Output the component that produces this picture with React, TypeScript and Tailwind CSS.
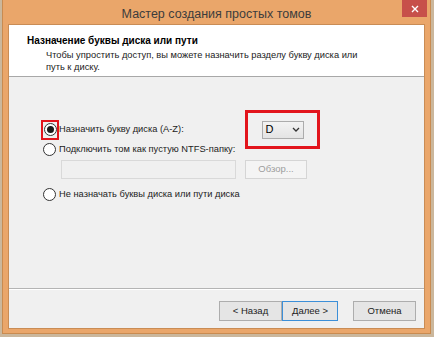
import React from "react";

function Radio({ checked }: { checked?: boolean }) {
  return (
    <span className="flex h-[13px] w-[13px] items-center justify-center rounded-full border border-[#333] bg-white">
      {checked && <span className="h-[7px] w-[7px] rounded-full bg-[#1a1a1a]" />}
    </span>
  );
}

export default function App() {
  return (
    <div
      className="h-[337px] w-[434px] overflow-hidden bg-[#cbb79c]"
      style={{ fontFamily: '"Liberation Sans", Arial, sans-serif' }}
    >
      <div className="ml-[2px] flex h-[334px] w-[429px] flex-col border-x border-b border-[#c98b50] bg-[#eaa66a]">
        {/* Title bar */}
        <div className="relative flex h-[24px] items-center justify-center pt-[4px]">
          <span className="text-[12.5px] leading-none text-[#3c3c3c]">Мастер создания простых томов</span>
          <div className="absolute right-[3px] top-0 flex h-[17px] w-[25px] items-center justify-center bg-[#c7504a]">
            <svg width="8" height="8" viewBox="0 0 8 8">
              <path d="M1 1L7 7M7 1L1 7" stroke="white" strokeWidth="1.4" />
            </svg>
          </div>
        </div>

        {/* Client area */}
        <div className="mx-[5px] mb-[4px] flex flex-1 flex-col border border-[#c98c55] bg-[#f0f0f0]">
          {/* Header */}
          <div className="h-[52px] border-b border-[#a8a8a8] bg-white pl-[18px] pt-[10px]">
            <div className="text-[10px] font-bold leading-[12px] text-black">Назначение буквы диска или пути</div>
            <div className="pl-[19px] pt-[2px] text-[9.3px] leading-[12px] text-[#222]">
              Чтобы упростить доступ, вы можете назначить разделу букву диска или
              <br />
              путь к диску.
            </div>
          </div>

          {/* Body */}
          <div className="flex flex-1 flex-col pl-[32px] pt-[33px]">
            <div className="flex items-center">
              <div className="flex h-[20px] w-[18px] items-center justify-center border-2 border-[#e2141c]">
                <Radio checked />
              </div>
              <span className="text-[9.3px] text-[#222]">Назначить букву диска (A-Z):</span>
              <div className="ml-auto mr-[104px] flex h-[39px] w-[75px] items-center justify-center border-[3px] border-[#e2141c]">
                <div className="flex h-[18px] w-[42px] items-center justify-between border border-[#acacac] bg-gradient-to-b from-[#f3f3f3] to-[#e4e4e4] px-[3px]">
                  <span className="text-[11px] leading-none text-black">D</span>
                  <svg width="8" height="5" viewBox="0 0 8 5">
                    <path d="M1 1L4 4L7 1" stroke="#333" strokeWidth="1.3" fill="none" />
                  </svg>
                </div>
              </div>
            </div>

            <div className="-mt-[6px] flex items-center pl-[2px]">
              <Radio />
              <span className="pl-[3px] text-[9.3px] text-[#222]">Подключить том как пустую NTFS-папку:</span>
            </div>

            <div className="mt-[3px] flex items-center gap-[9px] pl-[20px]">
              <div className="h-[19px] w-[175px] border border-[#d9d9d9] bg-[#f0f0f0]" />
              <div className="flex h-[19px] w-[62px] items-center justify-center border border-[#d5d5d5] bg-[#f4f4f4] text-[9.5px] text-[#9d9d9d]">
                Обзор...
              </div>
            </div>

            <div className="mt-[9px] flex items-center pl-[2px]">
              <Radio />
              <span className="pl-[3px] text-[9.3px] text-[#222]">Не назначать буквы диска или пути диска</span>
            </div>
          </div>

          {/* Footer */}
          <div className="flex h-[40px] items-start justify-end border-t border-[#b4b4b4] pr-[8px] pt-[12px] shadow-[inset_0_1px_0_#fff]">
            <div className="flex h-[20px] w-[63px] items-center justify-center border border-[#adadad] bg-[#e5e5e5] text-[9.5px] text-[#222]">
              &lt; Назад
            </div>
            <div className="flex h-[20px] w-[56px] items-center justify-center border border-[#3c8fd8] bg-[#e5e5e5] text-[9.5px] text-[#222]">
              Далее &gt;
            </div>
            <div className="ml-[15px] flex h-[20px] w-[63px] items-center justify-center border border-[#adadad] bg-[#e5e5e5] text-[9.5px] text-[#222]">
              Отмена
            </div>
          </div>
        </div>
      </div>
    </div>
  );
}
